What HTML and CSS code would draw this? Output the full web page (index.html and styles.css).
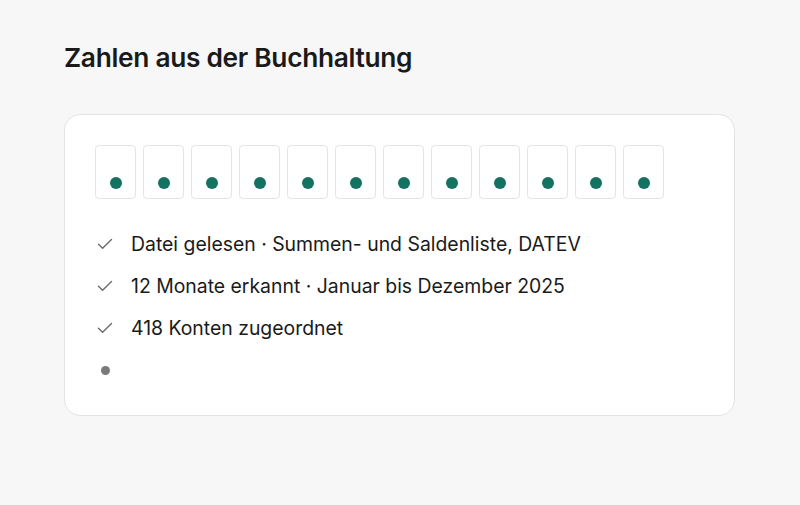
FILE: index.html
```html
<!DOCTYPE html>
<html lang="de">
<head>
    <meta charset="UTF-8">
    <meta name="viewport" content="width=device-width, initial-scale=1.0">
    <title>Zahlen aus der Buchhaltung</title>
    <link rel="stylesheet" href="styles.css">
</head>
<body>
    <div class="page">
        <h1 class="title">Zahlen aus der Buchhaltung</h1>

        <div class="card">
            <!-- ein Kästchen pro Monat -->
            <div class="months">
                <div class="month"><span class="dot"></span></div>
                <div class="month"><span class="dot"></span></div>
                <div class="month"><span class="dot"></span></div>
                <div class="month"><span class="dot"></span></div>
                <div class="month"><span class="dot"></span></div>
                <div class="month"><span class="dot"></span></div>
                <div class="month"><span class="dot"></span></div>
                <div class="month"><span class="dot"></span></div>
                <div class="month"><span class="dot"></span></div>
                <div class="month"><span class="dot"></span></div>
                <div class="month"><span class="dot"></span></div>
                <div class="month"><span class="dot"></span></div>
            </div>

            <ul class="steps">
                <li class="step">
                    <span class="mark"><svg width="16" height="12" viewBox="0 0 16 12"><path d="M1.5 6.2 L5.6 10.2 L14.5 1.6" fill="none" stroke="#6b6b6b" stroke-width="1.4" stroke-linecap="round" stroke-linejoin="round"/></svg></span>
                    <span>Datei gelesen · Summen- und Saldenliste, DATEV</span>
                </li>
                <li class="step">
                    <span class="mark"><svg width="16" height="12" viewBox="0 0 16 12"><path d="M1.5 6.2 L5.6 10.2 L14.5 1.6" fill="none" stroke="#6b6b6b" stroke-width="1.4" stroke-linecap="round" stroke-linejoin="round"/></svg></span>
                    <span>12 Monate erkannt · Januar bis Dezember 2025</span>
                </li>
                <li class="step">
                    <span class="mark"><svg width="16" height="12" viewBox="0 0 16 12"><path d="M1.5 6.2 L5.6 10.2 L14.5 1.6" fill="none" stroke="#6b6b6b" stroke-width="1.4" stroke-linecap="round" stroke-linejoin="round"/></svg></span>
                    <span>418 Konten zugeordnet</span>
                </li>
                <li class="step">
                    <span class="mark"><span class="pending"></span></span>
                </li>
            </ul>
        </div>
    </div>
</body>
</html>
```

FILE: styles.css
```css
body {
    margin: 0;
    background: #f7f7f7;
    font-family: Inter, 'Noto Sans', Arial, sans-serif;
    color: #1a1a1a;
}
.page {
    padding: 39px 65px 0 64px;
}
.title {
    margin: 0 0 37px;
    font-size: 26.3px;
    font-weight: 600;
    letter-spacing: -0.3px;
    line-height: 38px;
}
.card {
    background: #fff;
    border: 1px solid #e3e3e3;
    border-radius: 16px;
    padding: 30px 30px 24px;
}
.months {
    display: flex;
    gap: 7px;
}
.month {
    width: 41px;
    height: 54px;
    border: 1px solid #e4e4e4;
    border-radius: 4px;
    display: flex;
    justify-content: center;
    align-items: flex-end;
    padding-bottom: 9px;
    box-sizing: border-box;
}
.dot {
    width: 12px;
    height: 12px;
    border-radius: 50%;
    background: #117460;
}
.steps {
    list-style: none;
    margin: 24px 0 0;
    padding: 0;
}
.step {
    display: flex;
    align-items: center;
    height: 42px;
    font-size: 19.4px;
}
.mark {
    width: 36px;
    display: flex;
    align-items: center;
    padding-left: 2px;
    box-sizing: border-box;
}
.pending {
    width: 9px;
    height: 9px;
    border-radius: 50%;
    background: #7a7a7a;
    margin-left: 4px;
}
```
